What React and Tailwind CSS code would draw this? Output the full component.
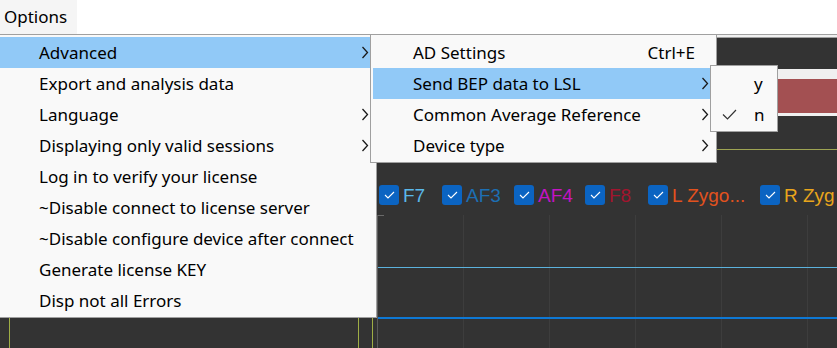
const MENU_FONT = { fontFamily: '"Noto Sans", sans-serif' };

const MAIN_ITEMS = [
  { label: 'Advanced', sub: true, active: true },
  { label: 'Export and analysis data' },
  { label: 'Language', sub: true },
  { label: 'Displaying only valid sessions', sub: true },
  { label: 'Log in to verify your license' },
  { label: '~Disable connect to license server' },
  { label: '~Disable configure device after connect' },
  { label: 'Generate license KEY' },
  { label: 'Disp not all Errors' },
];

const ADVANCED_ITEMS = [
  { label: 'AD Settings', shortcut: 'Ctrl+E' },
  { label: 'Send BEP data to LSL', sub: true, active: true },
  { label: 'Common Average Reference', sub: true },
  { label: 'Device type', sub: true },
];

const CHANNELS = [
  { label: 'F7', color: 'text-[#5ab8ea]', w: 'w-[63px]' },
  { label: 'AF3', color: 'text-[#1c6fb3]', w: 'w-[72px]' },
  { label: 'AF4', color: 'text-[#c414c4]', w: 'w-[71px]' },
  { label: 'F8', color: 'text-[#a3142e]', w: 'w-[63px]' },
  { label: 'L Zygo...', color: 'text-[#e2521e]', w: 'w-[112px]' },
  { label: 'R Zyg', color: 'text-[#e9a51c]', w: 'w-[54px]' },
];

function Chevron() {
  return (
    <svg width="8" height="13" viewBox="0 0 8 13" className="shrink-0">
      <polyline points="1.5,1 6.5,6.5 1.5,12" fill="none" stroke="#1a1a1a" strokeWidth="1.3" />
    </svg>
  );
}

function Check() {
  return (
    <svg width="15" height="11" viewBox="0 0 15 11">
      <polyline points="1,5.5 5.5,10 14,1" fill="none" stroke="#333" strokeWidth="1.2" />
    </svg>
  );
}

function MenuRow({ item, pad }) {
  return (
    <div className={`flex h-[31px] items-center ${pad} pr-[5px] text-[17px] text-black ${item.active ? 'bg-[#91c9f7]' : ''}`}>
      <span className="flex-1 whitespace-nowrap">{item.label}</span>
      {item.shortcut && <span className="mr-[14px] whitespace-nowrap">{item.shortcut}</span>}
      {item.sub && <Chevron />}
    </div>
  );
}

function ChannelBox({ ch }) {
  return (
    <div className={`flex items-center gap-[4px] shrink-0 ${ch.w}`}>
      <span className="flex h-[20px] w-[20px] shrink-0 items-center justify-center rounded-[3px] bg-[#0b64c2]">
        <svg width="11" height="8" viewBox="0 0 11 8">
          <polyline points="1,4 4,7 10,1" fill="none" stroke="#fff" strokeWidth="1.1" />
        </svg>
      </span>
      <span className={`whitespace-nowrap text-[19px] leading-none ${ch.color}`} style={{ fontFamily: '"Liberation Sans", Arial, sans-serif' }}>
        {ch.label}
      </span>
    </div>
  );
}

export default function App() {
  return (
    <div className="relative flex h-[348px] w-[837px] flex-col overflow-hidden bg-[#333333]" style={MENU_FONT}>
      {/* menu bar */}
      <div className="flex h-[35px] shrink-0 border-b border-[#a0a0a0] bg-white">
        <div className="flex h-[34px] w-[77px] items-center bg-[#f5f5f5] pl-[4px] text-[17px] text-black">Options</div>
      </div>
      <div className="h-[3px] shrink-0 border-b border-[#a0a0a0] bg-[#f0f0f0]" />

      {/* toolbar / status area behind menus */}
      <div className="h-[31px] shrink-0" />
      <div className="ml-[380px] shrink-0 bg-[#f0f0f0] pt-[10px] pb-[3px]">
        <div className="h-[34px] bg-[#a35052]" />
      </div>
      <div className="h-[33px] shrink-0" />
      <div className="ml-[380px] h-px shrink-0 bg-[#9ea453]" />

      {/* channel legend */}
      <div className="flex h-[65px] shrink-0 items-start pl-[379px] pt-[35px]">
        {CHANNELS.map((ch) => (
          <ChannelBox key={ch.label} ch={ch} />
        ))}
      </div>

      {/* plot area */}
      <div className="flex flex-1">
        <div className="flex w-[377px] shrink-0">
          <div className="ml-[9px] w-px bg-[#9fae45]" />
          <div className="ml-[348px] w-px bg-[#9fae45]" />
          <div className="ml-[13px] w-px bg-[#9fae45]" />
        </div>
        <div className="relative flex flex-1 border-l border-[#5a5a5a]">
          {[0, 1, 2, 3, 4, 5].map((i) => (
            <div key={i} className="h-full w-[86px] shrink-0 border-r border-[#3d3d3d]" />
          ))}
          <div className="absolute left-0 top-0 h-px w-[6px] bg-[#6a6a6a]" />
          <div className="absolute left-0 right-0 top-[52px] h-px bg-[#5cb2dd]" />
          <div className="absolute left-0 right-0 top-[102px] h-[2px] bg-[#0e78d4]" />
        </div>
      </div>

      {/* Options dropdown */}
      <div className="absolute left-[-3px] top-[34px] w-[380px] border border-[#a0a0a0] bg-[#f9f9f9] px-[2px] pt-[2px] pb-[1px]">
        {MAIN_ITEMS.map((item) => (
          <MenuRow key={item.label} item={item} pad="pl-[39px]" />
        ))}
      </div>

      {/* Advanced submenu */}
      <div className="absolute left-[370px] top-[34px] w-[347px] border border-[#a0a0a0] bg-[#f9f9f9] px-[2px] pt-[2px] pb-[1px]">
        {ADVANCED_ITEMS.map((item) => (
          <MenuRow key={item.label} item={item} pad="pl-[40px]" />
        ))}
      </div>

      {/* Send BEP submenu */}
      <div className="absolute left-[710px] top-[65px] w-[68px] border border-[#a0a0a0] bg-[#f9f9f9] px-[2px] pt-[2px] pb-[1px] text-[17px] text-black">
        <div className="flex h-[31px] items-center pl-[41px]">y</div>
        <div className="flex h-[31px] items-center">
          <span className="ml-[9px] flex w-[32px] items-center">
            <Check />
          </span>
          <span>n</span>
        </div>
      </div>
    </div>
  );
}
